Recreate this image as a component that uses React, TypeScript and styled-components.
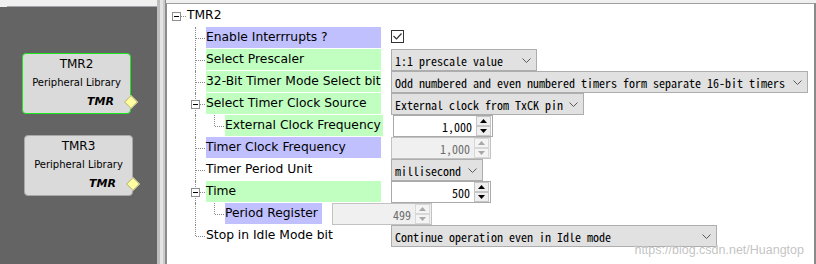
import React from 'react';
import styled, { createGlobalStyle } from 'styled-components';

const Global = createGlobalStyle`
  html, body { margin: 0; padding: 0; background: #f0f0f0; overflow: hidden; }
  body { font-family: "DejaVu Sans", sans-serif; }
`;

const MONO = `"Noto Sans Mono CJK SC", "Liberation Mono", monospace`;

const Screen = styled.div`
  position: relative;
  display: flex;
  width: 816px;
  height: 264px;
  overflow: hidden;
  background: #f0f0f0;
`;

const LeftPanel = styled.div`
  width: 157px;
  flex: none;
  display: flex;
  flex-direction: column;
`;

const LeftTopStrip = styled.div`
  height: 6px;
  background: #f0f0f0;
`;

const LeftTopRule = styled.div`
  height: 1px;
  background: linear-gradient(to right, #f0f0f0 0 7px, #a4a4ab 7px 100%);
`;

const Canvas = styled.div`
  position: relative;
  flex: 1;
  background: #646464;
`;

const NodeCard = styled.div<{ $selected?: boolean; $x: number; $y: number }>`
  position: absolute;
  left: ${(p) => p.$x}px;
  top: ${(p) => p.$y}px;
  width: 109px;
  height: 61px;
  box-sizing: border-box;
  border: 1px solid ${(p) => (p.$selected ? '#1ee61e' : '#a8a8a8')};
  border-radius: 4px;
  background: #dadada;
  display: flex;
  flex-direction: column;
  align-items: center;
  padding-top: 2px;
`;

const NodeTitle = styled.div`
  font-size: 12px;
  line-height: 16px;
  color: #000;
`;

const NodeSub = styled.div`
  margin-top: 4px;
  font-size: 10px;
  line-height: 13px;
  color: #000;
`;

const NodeTag = styled.div`
  align-self: flex-end;
  margin-right: 16px;
  margin-top: 6px;
  font-size: 11px;
  line-height: 14px;
  font-weight: bold;
  font-style: italic;
  color: #000;
`;

const Port = styled.div`
  position: absolute;
  right: -6px;
  top: 43px;
  width: 8px;
  height: 8px;
  background: #ffffa0;
  border: 1px solid #b9b98c;
  transform: rotate(45deg);
`;

const Splitter = styled.div`
  width: 9px;
  flex: none;
  background: linear-gradient(
    to right,
    #bdbdbd 0 3px,
    #e4e4e4 3px 6px,
    #cbcbcb 6px 8px,
    #8c8c8c 8px 9px
  );
`;

const RightColumn = styled.div`
  flex: 1;
  display: flex;
  flex-direction: column;
  min-width: 0;
`;

const RightTopStrip = styled.div`
  height: 3px;
  background: #f0f0f0;
`;

const PropertyPanel = styled.div`
  flex: 1;
  background: #fff;
  border-top: 1px solid #a0a0a0;
  border-left: 1px solid #8c8c8c;
  border-right: 2px solid #8a8a8a;
  padding: 1px 0 0 1px;
`;

const Tree = styled.div`
  display: flex;
  flex-direction: column;
`;

const Row = styled.div`
  display: flex;
  height: 22px;
  align-items: flex-start;
`;

const Guide = styled.div<{ $line: boolean }>`
  position: relative;
  width: 19px;
  height: 22px;
  flex: none;
  &::before {
    content: '';
    display: ${(p) => (p.$line ? 'block' : 'none')};
    position: absolute;
    left: 8px;
    top: 0;
    height: 22px;
    border-left: 1px dotted #8a8a8a;
  }
`;

type Vert = 'none' | 'full' | 'half';

const Connector = styled.div<{ $vert: Vert }>`
  position: relative;
  width: 19px;
  height: 22px;
  flex: none;
  &::before {
    content: '';
    display: ${(p) => (p.$vert === 'none' ? 'none' : 'block')};
    position: absolute;
    left: 8px;
    top: 0;
    height: ${(p) => (p.$vert === 'full' ? '22px' : '11px')};
    border-left: 1px dotted #8a8a8a;
  }
  &::after {
    content: '';
    position: absolute;
    left: 9px;
    right: 1px;
    top: 11px;
    border-top: 1px dotted #8a8a8a;
  }
`;

const Expander = styled.div`
  position: absolute;
  z-index: 1;
  left: 4px;
  top: 7px;
  width: 9px;
  height: 9px;
  box-sizing: border-box;
  border: 1px solid #8e8e8e;
  background: #fff;
  display: flex;
  align-items: center;
  justify-content: center;
  &::after {
    content: '';
    width: 5px;
    height: 1px;
    background: #000;
  }
`;

type Tone = 'purple' | 'green' | 'none';

const Label = styled.div<{ $tone: Tone; $w?: number }>`
  flex: none;
  width: ${(p) => (p.$w ? `${p.$w}px` : 'auto')};
  height: 21px;
  line-height: 21px;
  white-space: nowrap;
  overflow: visible;
  font-size: 12.3px;
  color: #000;
  background: ${(p) =>
    p.$tone === 'purple' ? '#c0c0ff' : p.$tone === 'green' ? '#c0ffc0' : 'transparent'};
`;

const ValueSlot = styled.div`
  margin-left: 10px;
  display: flex;
  align-items: flex-start;
  height: 22px;
`;

const CheckBox = styled.div`
  margin-top: 3px;
  width: 13px;
  height: 13px;
  box-sizing: border-box;
  border: 1px solid #333;
  background: #fff;
  display: flex;
  align-items: center;
  justify-content: center;
`;

const Combo = styled.div<{ $w: number }>`
  width: ${(p) => p.$w}px;
  height: 22px;
  box-sizing: border-box;
  border: 1px solid #adadad;
  background: #e1e1e1;
  display: flex;
  align-items: center;
  justify-content: space-between;
  padding: 0 5px 0 3px;
  font-family: ${MONO};
  font-size: 12px;
  color: #000;
  white-space: nowrap;
`;

const ComboText = styled.span`
  overflow: hidden;
`;

const Spinner = styled.div<{ $disabled?: boolean }>`
  width: 100px;
  height: 22px;
  box-sizing: border-box;
  border: 1px solid ${(p) => (p.$disabled ? '#c2c2c2' : '#a9a9a9')};
  background: ${(p) => (p.$disabled ? '#f0f0f0' : '#fff')};
  display: flex;
  align-items: center;
  justify-content: flex-end;
  padding-right: 1px;
  font-family: ${MONO};
  font-size: 12px;
  color: ${(p) => (p.$disabled ? '#6d6d6d' : '#000')};
`;

const SpinValue = styled.span`
  margin-right: 4px;
`;

const SpinButtons = styled.div`
  width: 15px;
  height: 20px;
  display: flex;
  flex-direction: column;
`;

const SpinButton = styled.div<{ $disabled?: boolean }>`
  flex: 1;
  box-sizing: border-box;
  border: 1px solid ${(p) => (p.$disabled ? '#d8d8d8' : '#c6c6c6')};
  background: ${(p) => (p.$disabled ? '#f4f4f4' : '#efefef')};
  display: flex;
  align-items: center;
  justify-content: center;
`;

const Watermark = styled.div`
  position: absolute;
  right: 12px;
  bottom: 7px;
  font-family: "Liberation Sans", Arial, sans-serif;
  font-size: 12.5px;
  line-height: 14px;
  color: rgba(192, 192, 192, 0.95);
  text-shadow: 0 0 1px rgba(255, 255, 255, 0.9);
  pointer-events: none;
`;

const Chevron = () => (
  <svg width="9" height="5" viewBox="0 0 9 5">
    <polyline points="0.5,0.5 4.5,4.5 8.5,0.5" fill="none" stroke="#5a5a5a" strokeWidth="1" />
  </svg>
);

const Arrow = ({ up, disabled }: { up?: boolean; disabled?: boolean }) => (
  <svg width="7" height="4" viewBox="0 0 7 4">
    <polygon
      points={up ? '3.5,0 7,4 0,4' : '0,0 7,0 3.5,4'}
      fill={disabled ? '#a8a8a8' : '#000'}
    />
  </svg>
);

const ComboBox = ({ w, text }: { w: number; text: string }) => (
  <Combo $w={w}>
    <ComboText>{text}</ComboText>
    <Chevron />
  </Combo>
);

const SpinBox = ({ value, disabled }: { value: string; disabled?: boolean }) => (
  <Spinner $disabled={disabled}>
    <SpinValue>{value}</SpinValue>
    <SpinButtons>
      <SpinButton $disabled={disabled}>
        <Arrow up disabled={disabled} />
      </SpinButton>
      <SpinButton $disabled={disabled}>
        <Arrow disabled={disabled} />
      </SpinButton>
    </SpinButtons>
  </Spinner>
);

const Check = () => (
  <CheckBox>
    <svg width="11" height="11" viewBox="0 0 11 11">
      <polyline points="1.5,5 4.5,8 9.5,2.5" fill="none" stroke="#333" strokeWidth="1.2" />
    </svg>
  </CheckBox>
);

type RowSpec = {
  label: string;
  guides: boolean[];
  vert: Vert;
  expander?: boolean;
  tone?: Tone;
  w?: number;
  value?: React.ReactNode;
};

const rows: RowSpec[] = [
  { label: 'TMR2', guides: [], vert: 'none', expander: true },
  { label: 'Enable Interrrupts ?', guides: [false], vert: 'full', tone: 'purple', w: 175, value: <Check /> },
  {
    label: 'Select Prescaler',
    guides: [false],
    vert: 'full',
    tone: 'green',
    w: 175,
    value: <ComboBox w={146} text="1:1 prescale value" />,
  },
  {
    label: '32-Bit Timer Mode Select bit',
    guides: [false],
    vert: 'full',
    tone: 'green',
    w: 175,
    value: <ComboBox w={417} text="Odd numbered and even numbered timers form separate 16-bit timers" />,
  },
  {
    label: 'Select Timer Clock Source',
    guides: [false],
    vert: 'full',
    expander: true,
    tone: 'green',
    w: 175,
    value: <ComboBox w={193} text="External clock from TxCK pin" />,
  },
  {
    label: 'External Clock Frequency',
    guides: [false, true],
    vert: 'half',
    tone: 'green',
    w: 158,
    value: <SpinBox value="1,000" />,
  },
  {
    label: 'Timer Clock Frequency',
    guides: [false],
    vert: 'full',
    tone: 'purple',
    w: 175,
    value: <SpinBox value="1,000" disabled />,
  },
  {
    label: 'Timer Period Unit',
    guides: [false],
    vert: 'full',
    tone: 'none',
    w: 175,
    value: <ComboBox w={92} text="millisecond" />,
  },
  {
    label: 'Time',
    guides: [false],
    vert: 'full',
    expander: true,
    tone: 'green',
    w: 175,
    value: <SpinBox value="500" />,
  },
  {
    label: 'Period Register',
    guides: [false, true],
    vert: 'half',
    tone: 'purple',
    w: 97,
    value: <SpinBox value="499" disabled />,
  },
  {
    label: 'Stop in Idle Mode bit',
    guides: [false],
    vert: 'half',
    tone: 'none',
    w: 175,
    value: <ComboBox w={326} text="Continue operation even in Idle mode" />,
  },
];

export default function App() {
  return (
    <>
      <Global />
      <Screen>
        <LeftPanel>
          <LeftTopStrip />
          <LeftTopRule />
          <Canvas>
            <NodeCard $selected $x={22} $y={46}>
              <NodeTitle>TMR2</NodeTitle>
              <NodeSub>Peripheral Library</NodeSub>
              <NodeTag>TMR</NodeTag>
              <Port />
            </NodeCard>
            <NodeCard $x={24} $y={128}>
              <NodeTitle>TMR3</NodeTitle>
              <NodeSub>Peripheral Library</NodeSub>
              <NodeTag>TMR</NodeTag>
              <Port />
            </NodeCard>
          </Canvas>
        </LeftPanel>
        <Splitter />
        <RightColumn>
          <RightTopStrip />
          <PropertyPanel>
            <Tree>
              {rows.map((r) => (
                <Row key={r.label}>
                  {r.guides.map((g, i) => (
                    <Guide key={i} $line={g} />
                  ))}
                  <Connector $vert={r.vert}>{r.expander && <Expander />}</Connector>
                  <Label $tone={r.tone ?? 'none'} $w={r.w}>
                    {r.label}
                  </Label>
                  {r.value && <ValueSlot>{r.value}</ValueSlot>}
                </Row>
              ))}
            </Tree>
          </PropertyPanel>
        </RightColumn>
        <Watermark>https://blog.csdn.net/Huangtop</Watermark>
      </Screen>
    </>
  );
}
